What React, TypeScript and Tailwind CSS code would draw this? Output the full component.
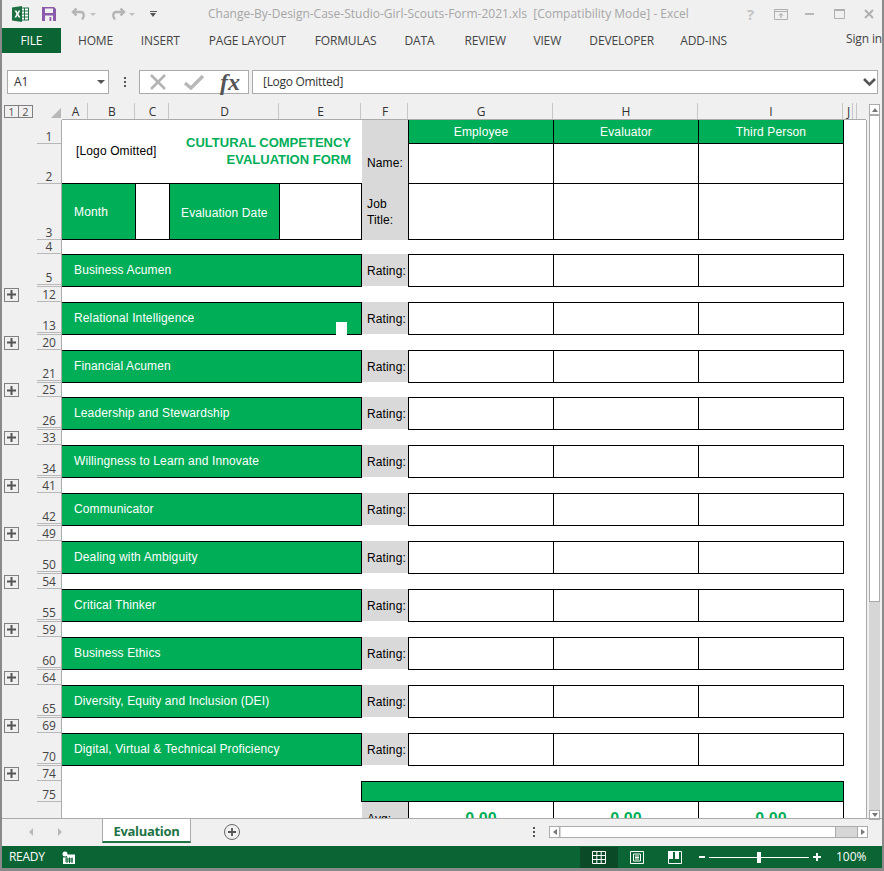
const sheetFont = { fontFamily: '"Liberation Sans", Arial, sans-serif' };
const numberFont = { fontFamily: '"Open Sans", "Noto Sans", sans-serif' };

type Section = { num: string; label: string; next: string; spacer: string; handle?: boolean };

const sections: Section[] = [
  { num: "5", label: "Business Acumen", next: "12", spacer: "h-[15px]" },
  { num: "13", label: "Relational Intelligence", next: "20", spacer: "h-[15px]", handle: true },
  { num: "21", label: "Financial Acumen", next: "25", spacer: "h-[14px]" },
  { num: "26", label: "Leadership and Stewardship", next: "33", spacer: "h-[15px]" },
  { num: "34", label: "Willingness to Learn and Innovate", next: "41", spacer: "h-[15px]" },
  { num: "42", label: "Communicator", next: "49", spacer: "h-[15px]" },
  { num: "50", label: "Dealing with Ambiguity", next: "54", spacer: "h-[15px]" },
  { num: "55", label: "Critical Thinker", next: "59", spacer: "h-[15px]" },
  { num: "60", label: "Business Ethics", next: "64", spacer: "h-[15px]" },
  { num: "65", label: "Diversity, Equity and Inclusion (DEI)", next: "69", spacer: "h-[15px]" },
  { num: "70", label: "Digital, Virtual & Technical Proficiency", next: "74", spacer: "h-[15px]" },
];

const ribbonTabs = [
  { label: "HOME", w: "w-[63px]" },
  { label: "INSERT", w: "w-[68px]" },
  { label: "PAGE LAYOUT", w: "w-[106px]" },
  { label: "FORMULAS", w: "w-[90px]" },
  { label: "DATA", w: "w-[60px]" },
  { label: "REVIEW", w: "w-[69px]" },
  { label: "VIEW", w: "w-[56px]" },
  { label: "DEVELOPER", w: "w-[91px]" },
  { label: "ADD-INS", w: "w-[166px]" },
];

const columns = [
  { label: "A", w: "w-[26px]" },
  { label: "B", w: "w-[47px]" },
  { label: "C", w: "w-[34px]" },
  { label: "D", w: "w-[110px]" },
  { label: "E", w: "w-[82px]" },
  { label: "F", w: "w-[47px]" },
  { label: "G", w: "w-[145px]" },
  { label: "H", w: "w-[145px]" },
  { label: "I", w: "w-[145px]" },
  { label: "J", w: "w-[10px]" },
  { label: "", w: "w-[4px]" },
];

function ExcelLogo() {
  return (
    <svg width="17" height="16" viewBox="0 0 17 16">
      <rect x="8" y="2" width="8.5" height="12" fill="#fff" stroke="#1d6f42" />
      <path d="M9 5h7M9 8h7M9 11h7M12.5 2v12" stroke="#1d6f42" strokeWidth="1" />
      <path d="M0 1.6 10 0v16L0 14.4z" fill="#1d6f42" />
      <path d="M2.6 4.6h1.9l1 2.1 1.1-2.1h1.7L6.5 8l1.9 3.4H6.5L5.4 9.2l-1.1 2.2H2.5L4.5 8z" fill="#fff" />
    </svg>
  );
}

function SaveIcon() {
  return (
    <svg width="14" height="14" viewBox="0 0 14 14">
      <path d="M0 0h12l2 2v12H0z" fill="#8a5aab" />
      <rect x="3" y="1.5" width="8" height="4.5" fill="#f0f0f0" />
      <rect x="3" y="8.5" width="8" height="5.5" fill="#f0f0f0" />
      <rect x="7.5" y="10" width="1.8" height="4" fill="#8a5aab" />
    </svg>
  );
}

function ArrowIcon({ flip }: { flip?: boolean }) {
  return (
    <svg width="16" height="14" viewBox="0 0 16 14" className={flip ? "-scale-x-100" : ""}>
      <path d="M5.5 1.5 2 5l3.5 3.5M2.5 5h7c3.5 0 4.5 4 1.5 7.5" fill="none" stroke="#b4b4b4" strokeWidth="2.4" />
    </svg>
  );
}

function Caret() {
  return <div className="h-0 w-0 border-x-[3px] border-t-[3px] border-x-transparent border-t-[#c0c0c0]" />;
}

function ScrollArrow({ dir }: { dir: "up" | "down" | "left" | "right" }) {
  const shape =
    dir === "up"
      ? "h-0 w-0 border-x-[3px] border-b-[4px] border-x-transparent border-b-[#777777]"
      : dir === "down"
        ? "h-0 w-0 border-x-[3px] border-t-[4px] border-x-transparent border-t-[#777777]"
        : dir === "left"
          ? "h-0 w-0 border-y-[3px] border-r-[4px] border-y-transparent border-r-[#777777]"
          : "h-0 w-0 border-y-[3px] border-l-[4px] border-y-transparent border-l-[#777777]";
  return <div className={shape} />;
}

function Dots() {
  return (
    <div className="flex flex-col gap-[2px]">
      <div className="h-[2px] w-[2px] bg-[#555555]" />
      <div className="h-[2px] w-[2px] bg-[#555555]" />
      <div className="h-[2px] w-[2px] bg-[#555555]" />
    </div>
  );
}

function TitleBar() {
  return (
    <div className="flex h-[28px] items-center text-[#a6a6a6]">
      <div className="ml-[10px] w-[30px]">
        <ExcelLogo />
      </div>
      <div className="w-[29px]">
        <SaveIcon />
      </div>
      <ArrowIcon />
      <div className="ml-[3px] mr-[14px]">
        <Caret />
      </div>
      <ArrowIcon flip />
      <div className="ml-[3px] mr-[15px]">
        <Caret />
      </div>
      <div className="flex w-[58px] flex-col gap-[1px]">
        <div className="h-[1px] w-[7px] bg-[#555555]" />
        <div className="h-0 w-0 border-x-[3.5px] border-t-[4px] border-x-transparent border-t-[#555555]" />
      </div>
      <div className="w-[539px] whitespace-nowrap text-[12px]">
        Change-By-Design-Case-Studio-Girl-Scouts-Form-2021.xls&nbsp; [Compatibility Mode] - Excel
      </div>
      <div className="w-[27px] text-[15px] font-bold text-[#c4c4c4]">?</div>
      <svg width="14" height="11" viewBox="0 0 14 11" className="mr-[17px]">
        <path d="M.5.5h13v10H.5zM.5 2.5h13" fill="none" stroke="#b0b0b0" />
        <path d="M7 9V5M5 6.5l2-2 2 2" fill="none" stroke="#a0a0a0" />
      </svg>
      <div className="mr-[20px] h-[2px] w-[9px] bg-[#b8b8b8]" />
      <svg width="11" height="10" viewBox="0 0 11 10" className="mr-[19px]">
        <path d="M.5 1h10v8.5H.5z" fill="none" stroke="#b0b0b0" />
        <path d="M0 1h11" stroke="#b0b0b0" strokeWidth="2" />
      </svg>
      <svg width="10" height="10" viewBox="0 0 10 10">
        <path d="M1 1l8 8M9 1l-8 8" stroke="#b0b0b0" strokeWidth="2" />
      </svg>
    </div>
  );
}

function RibbonTabs() {
  return (
    <div className="flex h-[25px] items-center text-[12px] tracking-[-0.15px] text-[#444444]">
      <div className="mr-[17px] flex h-full w-[59px] items-center justify-center bg-[#0b6433] pt-[1px] text-white">FILE</div>
      {ribbonTabs.map((t) => (
        <div key={t.label} className={`${t.w} whitespace-nowrap pt-[1px]`}>
          {t.label}
        </div>
      ))}
      <div className="mb-[3px] whitespace-nowrap">Sign in</div>
    </div>
  );
}

function FormulaBar() {
  return (
    <div className="flex h-[50px] pt-[17px] text-[12px] text-[#333333]">
      <div className="ml-[5px] flex h-[24px] w-[102px] items-center justify-between border border-[#ababab] bg-white pl-[6px] pr-[3px]">
        <span>A1</span>
        <div className="h-0 w-0 border-x-[4px] border-t-[4px] border-x-transparent border-t-[#555555]" />
      </div>
      <div className="ml-[15px] mr-[13px] flex h-[24px] items-center">
        <Dots />
      </div>
      <div className="flex h-[24px] w-[110px] items-center border border-[#ababab] bg-white">
        <svg width="18" height="16" viewBox="0 0 18 16" className="ml-[9px]">
          <path d="M2 1l14 14M16 1L2 15" stroke="#b4b4b4" strokeWidth="2.6" />
        </svg>
        <svg width="20" height="16" viewBox="0 0 20 16" className="ml-[17px]">
          <path d="M1 9l6 5L19 2" fill="none" stroke="#b8b8b8" strokeWidth="3.4" />
        </svg>
        <span
          className="ml-[16px] text-[24px] leading-none font-bold italic text-[#555555]"
          style={{ fontFamily: '"Liberation Serif", serif' }}
        >
          fx
        </span>
      </div>
      <div className="ml-[3px] flex h-[24px] w-[626px] items-center justify-between border border-[#ababab] bg-white pl-[10px] pr-[1px]">
        <span className="tracking-[-0.3px]">[Logo Omitted]</span>
        <svg width="13" height="9" viewBox="0 0 13 9">
          <path d="M1 1l5.5 5.5L12 1" fill="none" stroke="#555555" strokeWidth="2.6" />
        </svg>
      </div>
    </div>
  );
}

function ColumnHeaders() {
  return (
    <div className="flex h-[17px] text-[12px] text-[#333333]">
      <div className="ml-[2px] mt-[2px] flex h-[13px] w-[29px]">
        <div className="flex w-[15px] items-center justify-center border border-[#808080] text-[11px] leading-none text-[#555555]">1</div>
        <div className="ml-[-1px] flex w-[15px] items-center justify-center border border-[#808080] text-[11px] leading-none text-[#555555]">2</div>
      </div>
      <div className="flex w-[29px] items-end justify-end pb-[2px] pr-[1px]">
        <div className="h-0 w-0 border-b-[10px] border-l-[10px] border-b-[#b8b8b8] border-l-transparent" />
      </div>
      <div className="flex w-[804px] border-b border-[#ababab]">
        {columns.map((c, i) => (
          <div key={i} className={`${c.w} flex items-center justify-center border-r border-[#c6c6c6] pl-[2px] pt-[2px] leading-none`}>
            {c.label}
          </div>
        ))}
      </div>
    </div>
  );
}

function RowHead({ num, plus, h, inner }: { num: string; plus?: boolean; h: string; inner?: boolean }) {
  return (
    <div className={`${h} flex w-[60px] shrink-0 border-r border-[#ababab] bg-[#f0f0f0] text-[12px] tracking-normal text-[#444444]`}>
      <div className="flex w-[35px] items-center pl-[2px]">
        {plus && (
          <div className="flex h-[14px] w-[15px] items-center justify-center border border-[#808080]">
            <svg width="9" height="9" viewBox="0 0 9 9">
              <path d="M4.5 0v9M0 4.5h9" stroke="#555555" strokeWidth="2" />
            </svg>
          </div>
        )}
      </div>
      <div className="flex flex-1 flex-col border-b border-[#b8b8b8]">
        <div className="flex flex-1 items-end justify-center leading-[12px]" style={numberFont}>
          {num}
        </div>
        {inner && <div className="h-[2px] border-t border-[#b8b8b8]" />}
      </div>
    </div>
  );
}

function TopBlock() {
  const head = "flex items-center justify-center border-l border-black bg-[#00ae58] text-white";
  const blank = "border-l border-t border-black bg-white";
  return (
    <div className="flex">
      <div>
        <RowHead num="1" h="h-[24px]" />
        <RowHead num="2" h="h-[40px]" />
        <RowHead num="3" h="h-[56px]" />
      </div>
      <div className="grid grid-cols-[73px_34px_110px_83px_46px_145px_145px_146px] grid-rows-[23px_40px_57px]">
        <div className="col-span-4 row-span-2 flex items-center justify-between pb-[1px] pl-[14px] pr-[11px]">
          <span className="whitespace-nowrap text-black">[Logo Omitted]</span>
          <span className="text-right text-[13px] leading-[17px] font-bold tracking-normal text-[#00ae58]">
            CULTURAL COMPETENCY
            <br />
            EVALUATION FORM
          </span>
        </div>
        <div className="bg-[#d9d9d9]" />
        <div className={head}>Employee</div>
        <div className={head}>Evaluator</div>
        <div className={`${head} border-r`}>Third Person</div>

        <div className="flex items-center bg-[#d9d9d9] pl-[5px]">Name:</div>
        <div className={blank} />
        <div className={blank} />
        <div className={`${blank} border-r`} />

        <div className="flex items-center border-y border-black bg-[#00ae58] pl-[12px] text-white">Month</div>
        <div className="border-y border-l border-black bg-white" />
        <div className="flex items-center border-y border-l border-black bg-[#00ae58] pl-[11px] pt-[2px] text-white">Evaluation Date</div>
        <div className="border border-black bg-white" />
        <div className="flex items-center bg-[#d9d9d9] pl-[5px] pt-[1px] leading-[16px]">
          <span>
            Job
            <br />
            Title:
          </span>
        </div>
        <div className="border-y border-l border-black bg-white" />
        <div className="border-y border-l border-black bg-white" />
        <div className="border border-black bg-white" />
      </div>
    </div>
  );
}

function SectionRow({ section }: { section: Section }) {
  return (
    <>
      <div className="flex">
        <RowHead num={section.num} h="h-[33px]" inner />
        <div className="relative flex h-[33px] w-[300px] items-center border-y border-r border-black bg-[#00ae58] pb-[2px] pl-[12px] text-white">
          {section.label}
          {section.handle && <div className="absolute bottom-[-1px] right-[14px] h-[13px] w-[11px] bg-white" />}
        </div>
        <div className="flex h-[32px] w-[46px] items-center whitespace-nowrap bg-[#d9d9d9] pl-[5px] pt-[2px]">Rating:</div>
        <div className="h-[33px] w-[145px] border-y border-l border-black bg-white" />
        <div className="h-[33px] w-[145px] border-y border-l border-black bg-white" />
        <div className="h-[33px] w-[146px] border border-black bg-white" />
      </div>
      <div className="flex">
        <RowHead num={section.next} h={section.spacer} plus />
      </div>
    </>
  );
}

function AverageRows() {
  const cell = "flex h-[34px] w-[145px] items-center justify-center border-l border-black bg-white text-[16px] font-bold text-[#00ae58]";
  return (
    <>
      <div className="flex">
        <RowHead num="75" h="h-[21px]" />
        <div className="ml-[299px] h-[21px] w-[483px] border border-black bg-[#00ae58]" />
      </div>
      <div className="flex">
        <div className="h-[34px] w-[60px] shrink-0 border-r border-[#ababab] bg-[#f0f0f0]" />
        <div className="ml-[300px] flex h-[34px] w-[46px] items-center bg-[#d9d9d9] pl-[5px]">Avg:</div>
        <div className={cell}>0.00</div>
        <div className={cell}>0.00</div>
        <div className={`${cell} w-[146px] border-r`}>0.00</div>
      </div>
    </>
  );
}

function VerticalScrollbar() {
  return (
    <div className="h-[698px] w-[16px] border-l border-[#ababab] pl-[2px]">
      <div className="mt-[-16px] flex h-[716px] w-[11px] flex-col">
        <div className="flex h-[11px] items-center justify-center border border-[#ababab] bg-white">
          <ScrollArrow dir="up" />
        </div>
        <div className="h-[487px] border border-[#ababab] bg-white" />
        <div className="flex-1 bg-[#d6d6d6]" />
        <div className="flex h-[10px] items-center justify-center border border-[#ababab] bg-white">
          <ScrollArrow dir="down" />
        </div>
      </div>
    </div>
  );
}

function SheetTabs() {
  return (
    <div className="flex h-[28px] border-t border-[#ababab]">
      <div className="ml-[27px] mr-[40px] mt-[9px] flex gap-[25px]">
        <div className="h-0 w-0 border-y-[4px] border-r-[4px] border-y-transparent border-r-[#b8b8b8]" />
        <div className="h-0 w-0 border-y-[4px] border-l-[4px] border-y-transparent border-l-[#b8b8b8]" />
      </div>
      <div className="mt-[-1px] flex h-[25px] w-[89px] items-center justify-center border-x border-t border-b-2 border-[#ababab] border-b-[#217346] bg-white pt-[3px] text-[13px] font-bold tracking-[-0.3px] text-[#217346]">
        Evaluation
      </div>
      <div className="ml-[33px] mt-[5px] flex h-[16px] w-[16px] items-center justify-center rounded-full border border-[#666666]">
        <svg width="10" height="10" viewBox="0 0 10 10">
          <path d="M5 1v8M1 5h8" stroke="#555555" strokeWidth="1.8" />
        </svg>
      </div>
      <div className="ml-[293px] mt-[8px]">
        <Dots />
      </div>
      <div className="ml-[14px] mt-[7px] flex h-[12px] w-[319px] border border-[#ababab] bg-[#d6d6d6]">
        <div className="flex w-[10px] items-center justify-center border-r border-[#ababab] bg-white">
          <ScrollArrow dir="left" />
        </div>
        <div className="ml-[1px] w-[275px] border-r border-[#ababab] bg-white" />
        <div className="flex-1" />
        <div className="flex w-[10px] items-center justify-center border-l border-[#ababab] bg-white">
          <ScrollArrow dir="right" />
        </div>
      </div>
    </div>
  );
}

function StatusBar() {
  return (
    <div className="flex h-[22px] items-center bg-[#0b6433] text-[12px] text-white">
      <span className="ml-[7px] w-[53px] tracking-[-0.3px]">READY</span>
      <svg width="13" height="13" viewBox="0 0 13 13" className="w-[518px]" preserveAspectRatio="xMinYMid">
        <circle cx="3" cy="3" r="2.5" fill="#fff" />
        <path d="M5 3.5h8V13H1V6.5h4z" fill="#fff" />
        <path d="M3 8h8M3 10h8M5 6.5V12M7.5 6.5V12M10 6.5V12" stroke="#0b6433" />
      </svg>
      <div className="flex h-[21px] w-[38px] items-center justify-center bg-[#0a4a26]">
        <svg width="14" height="13" viewBox="0 0 14 13">
          <path d="M.5.5h13v12H.5zM.5 4.5h13M.5 8.5h13M4.8.5v12M9.2.5v12" fill="none" stroke="#fff" />
        </svg>
      </div>
      <svg width="14" height="13" viewBox="0 0 14 13" className="ml-[12px]">
        <path d="M.5.5h13v12H.5z" fill="none" stroke="#fff" />
        <path d="M3.5 3h7v7h-7zM5 5h4M5 6.5h4M5 8h4" fill="none" stroke="#fff" />
      </svg>
      <svg width="14" height="13" viewBox="0 0 14 13" className="ml-[24px]">
        <path d="M.5.5h13v12H.5z" fill="none" stroke="#fff" />
        <path d="M0 0h5v8H0zM7 0h4v8H7z" fill="#fff" />
      </svg>
      <div className="ml-[17px] h-[2px] w-[6px] bg-white" />
      <div className="relative ml-[4px] h-[1px] w-[100px] bg-white">
        <div className="absolute left-[48px] top-[-5px] h-[11px] w-[4px] bg-white" />
      </div>
      <svg width="8" height="8" viewBox="0 0 8 8" className="ml-[4px]">
        <path d="M4 0v8M0 4h8" stroke="#fff" strokeWidth="2" />
      </svg>
      <span className="ml-[15px]">100%</span>
    </div>
  );
}

export default function App() {
  return (
    <div
      className="flex h-[871px] w-[884px] flex-col overflow-hidden border-x-2 border-b-[3px] border-x-[#8a8a8a] border-b-[#8a8a8a] bg-[#f0f0f0]"
      style={{ fontFamily: '"Open Sans", "Noto Sans", sans-serif' }}
    >
      <TitleBar />
      <RibbonTabs />
      <FormulaBar />
      <ColumnHeaders />
      <div className="flex">
        <div className="h-[698px] w-[864px] overflow-hidden bg-white text-[12px] tracking-[0.13px] text-black" style={sheetFont}>
          <TopBlock />
          <div className="flex">
            <RowHead num="4" h="h-[14px]" />
          </div>
          {sections.map((s) => (
            <SectionRow key={s.num} section={s} />
          ))}
          <AverageRows />
        </div>
        <VerticalScrollbar />
      </div>
      <SheetTabs />
      <StatusBar />
    </div>
  );
}
